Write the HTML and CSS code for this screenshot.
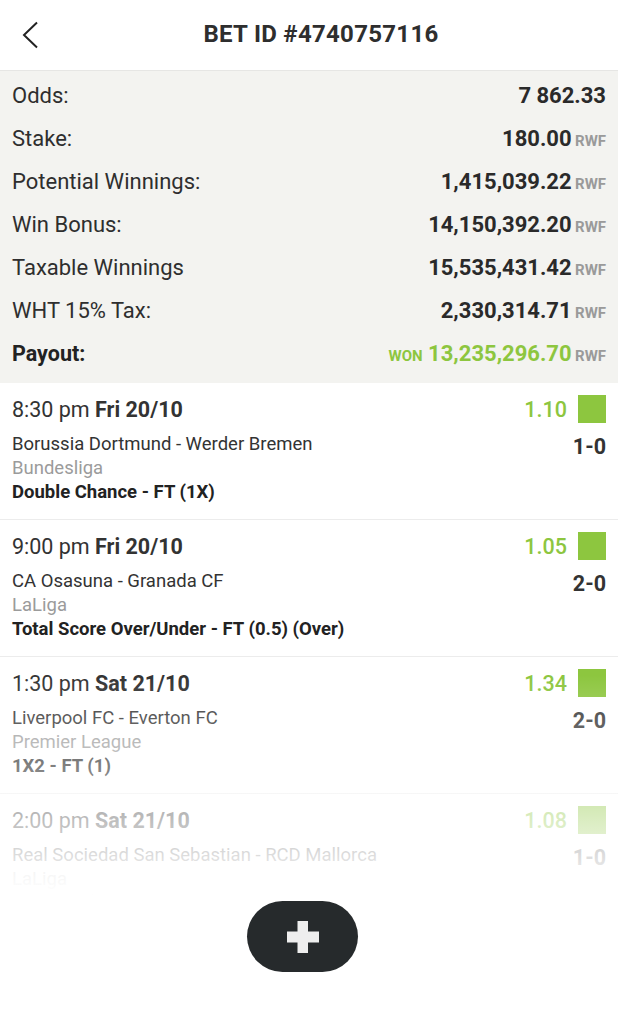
FILE: index.html
```html
<!DOCTYPE html>
<html lang="en">
<head>
<meta charset="utf-8">
<title>Bet details</title>
<link rel="stylesheet" href="styles.css">
</head>
<body>
<div class="page">
  <header class="topbar">
    <button class="back" aria-label="Back">
      <svg width="18" height="28" viewBox="0 0 18 28"><path d="M15 1.5 L2 14 L15 26.5" fill="none" stroke="#222" stroke-width="2"/></svg>
    </button>
    <h1 class="title">BET ID #4740757116</h1>
    <span></span>
  </header>

  <section class="summary">
    <div class="row"><span class="label">Odds:</span><span class="value">7 862.33</span></div>
    <div class="row"><span class="label">Stake:</span><span class="value">180.00 <small class="cur">RWF</small></span></div>
    <div class="row"><span class="label">Potential Winnings:</span><span class="value">1,415,039.22 <small class="cur">RWF</small></span></div>
    <div class="row"><span class="label">Win Bonus:</span><span class="value">14,150,392.20 <small class="cur">RWF</small></span></div>
    <div class="row"><span class="label">Taxable Winnings</span><span class="value">15,535,431.42 <small class="cur">RWF</small></span></div>
    <div class="row"><span class="label">WHT 15% Tax:</span><span class="value">2,330,314.71 <small class="cur">RWF</small></span></div>
    <div class="row"><span class="label strong">Payout:</span><span class="value won"><small class="won-tag">WON</small> 13,235,296.70 <small class="cur">RWF</small></span></div>
  </section>

  <section class="matches">
    <article class="match">
      <div class="line-top">
        <span class="time">8:30 pm <b>Fri 20/10</b></span>
        <span class="odd">1.10 <i class="status"></i></span>
      </div>
      <div class="line-teams"><span class="teams">Borussia Dortmund - Werder Bremen</span><span class="score">1-0</span></div>
      <div class="league">Bundesliga</div>
      <div class="market">Double Chance - FT (1X)</div>
    </article>
    <article class="match">
      <div class="line-top">
        <span class="time">9:00 pm <b>Fri 20/10</b></span>
        <span class="odd">1.05 <i class="status"></i></span>
      </div>
      <div class="line-teams"><span class="teams">CA Osasuna - Granada CF</span><span class="score">2-0</span></div>
      <div class="league">LaLiga</div>
      <div class="market">Total Score Over/Under - FT (0.5) (Over)</div>
    </article>
    <article class="match">
      <div class="line-top">
        <span class="time">1:30 pm <b>Sat 21/10</b></span>
        <span class="odd">1.34 <i class="status"></i></span>
      </div>
      <div class="line-teams"><span class="teams">Liverpool FC - Everton FC</span><span class="score">2-0</span></div>
      <div class="league">Premier League</div>
      <div class="market">1X2 - FT (1)</div>
    </article>
    <article class="match">
      <div class="line-top">
        <span class="time">2:00 pm <b>Sat 21/10</b></span>
        <span class="odd">1.08 <i class="status"></i></span>
      </div>
      <div class="line-teams"><span class="teams">Real Sociedad San Sebastian - RCD Mallorca</span><span class="score">1-0</span></div>
      <div class="league">LaLiga</div>
      <div class="market">1X2 - FT (1)</div>
    </article>
  </section>

  <div class="fade"></div>
  <button class="fab" aria-label="Add">
    <svg width="32" height="32" viewBox="0 0 32 32"><path d="M10.5 0 H21 V10.5 H32 V21.5 H21 V32 H10.5 V21.5 H0 V10.5 H10.5 Z" fill="#eeeeee"/></svg>
  </button>
</div>
</body>
</html>
```

FILE: styles.css
```css
* { box-sizing: border-box; }
html, body { margin: 0; padding: 0; background: #fff; }
body {
  font-family: Roboto, "Liberation Sans", Arial, sans-serif;
  color: #2b2b2b;
  width: 618px;
  height: 1030px;
  overflow: hidden;
}
.page { position: relative; width: 618px; height: 1030px; overflow: hidden; }

.topbar {
  height: 71px;
  display: grid;
  grid-template-columns: 46px 1fr 22px;
  align-items: center;
  border-bottom: 1px solid #e6e6e4;
}
.back {
  border: 0; background: none; padding: 0;
  margin-left: 22px; width: 18px; height: 28px;
  display: flex; align-items: center;
}
.title {
  margin: 0;
  text-align: center;
  font-size: 24px;
  font-weight: 700;
  color: #2e2e2e;
  letter-spacing: 0.3px;
  padding-bottom: 3px;
}

.summary {
  background: #f3f3f0;
  padding: 3px 12px 8px;
}
.row {
  height: 43px;
  display: flex;
  justify-content: space-between;
  align-items: center;
}
.label { font-size: 22px; color: #2e2e2e; }
.label.strong { font-weight: 700; color: #222; font-size: 21.5px; }
.value { font-size: 22px; font-weight: 700; color: #2a2a2a; }
.cur { font-size: 15px; font-weight: 700; color: #9a9a9a; margin-left: -2px; }
.won { color: #8dc63f; }
.won-tag { font-size: 15px; font-weight: 700; color: #8dc63f; }

.match {
  padding: 12px 12px 14px;
  border-bottom: 1px solid #ececec;
}
.line-top {
  height: 28px;
  display: flex;
  justify-content: space-between;
  align-items: center;
}
.time { font-size: 21.5px; color: #333; }
.time b { font-weight: 700; }
.odd {
  display: flex; align-items: center;
  font-size: 21.5px; font-weight: 500; color: #8dc63f;
}
.status {
  display: inline-block;
  width: 28px; height: 28px;
  margin-left: 11px;
  background: #8dc63f;
}
.line-teams {
  margin-top: 9px;
  height: 24px;
  display: flex;
  justify-content: space-between;
  align-items: center;
}
.teams { font-size: 18.5px; color: #333; }
.score { font-size: 21.5px; font-weight: 700; color: #333; position: relative; top: 2px; }
.league { height: 24px; line-height: 24px; font-size: 18.5px; color: #9b9b9b; }
.market { height: 25px; line-height: 25px; font-size: 18.5px; font-weight: 700; color: #222; }

.fade {
  position: absolute;
  left: 0; right: 0; top: 675px; bottom: 0;
  background: linear-gradient(to bottom, rgba(255,255,255,0) 0px, rgba(255,255,255,0.7) 150px, #fff 220px);
}
.fab {
  position: absolute;
  left: 247px; top: 901px;
  width: 111px; height: 71px;
  border: 0; border-radius: 36px;
  background: #262a2c;
  display: flex; align-items: center; justify-content: center;
  padding: 0;
}
```
